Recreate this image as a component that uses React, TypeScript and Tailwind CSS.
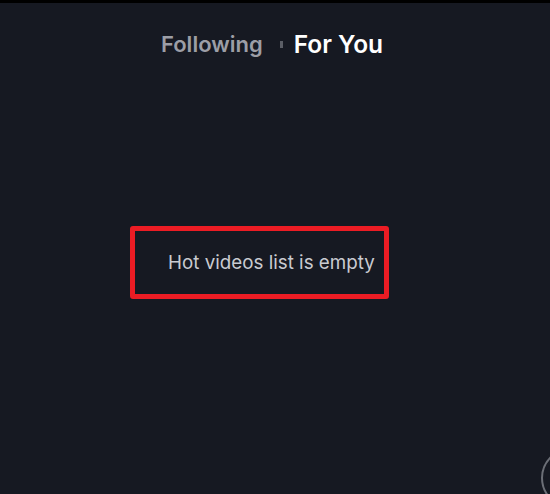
export default function App() {
  return (
    <div
      className="relative h-[494px] w-[550px] overflow-hidden bg-[#161922]"
      style={{ fontFamily: "Inter, 'Noto Sans', sans-serif" }}
    >
      <div className="h-[3px] bg-black" />
      <div className="flex items-center pl-[161px] pt-[27px]">
        <span className="text-[22px] font-semibold leading-7 text-[#9c9ea6]">Following</span>
        <span className="ml-[17px] mr-[11px] h-[7px] w-[3px] bg-[#5b5e66]" />
        <span className="text-[24.5px] font-semibold leading-7 text-white">For You</span>
      </div>
      <div className="ml-[130px] mt-[168px] flex h-[73px] w-[259px] items-center rounded-[3px] border-[5px] border-[#ec1c24] pl-[33px]">
        <span className="text-[18.8px] leading-6 text-[#c9cbd1]">Hot videos list is empty</span>
      </div>
      <div className="absolute left-[541px] top-[448px] h-[60px] w-[60px] rounded-full border-2 border-[#6b6e76]" />
    </div>
  );
}
